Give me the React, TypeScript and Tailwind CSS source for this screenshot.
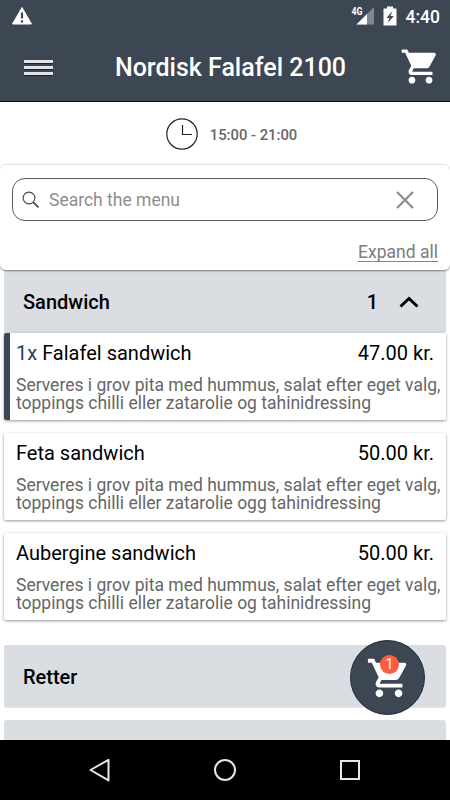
import { Fragment } from 'react';

interface MenuItem {
  name: string;
  price: string;
  lines: string[];
  quantity?: number;
}

const items: MenuItem[] = [
  {
    name: 'Falafel sandwich',
    price: '47.00 kr.',
    lines: ['Serveres i grov pita med hummus, salat efter eget valg,', 'toppings chilli eller zatarolie og tahinidressing'],
    quantity: 1,
  },
  {
    name: 'Feta sandwich',
    price: '50.00 kr.',
    lines: ['Serveres i grov pita med hummus, salat efter eget valg,', 'toppings chilli eller zatarolie ogg tahinidressing'],
  },
  {
    name: 'Aubergine sandwich',
    price: '50.00 kr.',
    lines: ['Serveres i grov pita med hummus, salat efter eget valg,', 'toppings chilli eller zatarolie og tahinidressing'],
  },
];

const CartIcon = ({ className }: { className: string }) => (
  <svg viewBox="0 0 24 24" fill="white" className={className}>
    <path d="M7 18c-1.1 0-1.99.9-1.99 2S5.9 22 7 22s2-.9 2-2-.9-2-2-2zM1 2v2h2l3.6 7.59-1.35 2.45c-.16.28-.25.61-.25.96 0 1.1.9 2 2 2h12v-2H7.42c-.14 0-.25-.11-.25-.25l.03-.12.9-1.63h7.45c.75 0 1.41-.41 1.75-1.03l3.58-6.49A1.003 1.003 0 0 0 20 4H5.21l-.94-2H1zm16 16c-1.1 0-1.99.9-1.99 2s.89 2 1.99 2 2-.9 2-2-.9-2-2-2z" />
  </svg>
);

const StatusBar = () => (
  <div className="flex h-8 items-center justify-between pl-3 pr-2.5">
    <svg viewBox="0 0 20 18" className="h-[18px] w-5">
      <path d="M10 .5 19.5 17H.5Z" fill="white" stroke="white" strokeLinejoin="round" />
      <path d="M10 5.5v6M10 13.2v2.2" stroke="#3d4653" strokeWidth="2.2" />
    </svg>
    <div className="flex items-center">
      <svg viewBox="0 0 24 20" className="h-5 w-6">
        <path d="M23 1v17.5H5.5Z" fill="#818790" />
        <path d="M16 8v10.5H5.5Z" fill="white" />
        <text x="0.5" y="8.8" fontSize="10" fontWeight="700" fontFamily="Roboto" fill="white" textLength="11" lengthAdjust="spacingAndGlyphs">4G</text>
      </svg>
      <svg viewBox="0 0 14 20" className="ml-2 h-5 w-3.5">
        <path d="M4 .5h6v2h3q.5 0 .5.5v16q0 .5-.5.5H1Q.5 19.5.5 19V3Q.5 2.500 1 2.500h3Z" fill="white" />
        <path d="M9.500 5 3.500 12h3L4.800 17l6-7H7.500Z" fill="#3d4653" />
      </svg>
      <span className="ml-[9px] pt-0.5 text-[17.5px] font-medium leading-8 text-white">4:40</span>
    </div>
  </div>
);

const Header = () => (
  <header className="h-[102px] shrink-0 border-b border-[#080f1c] bg-[#3d4653]">
    <StatusBar />
    <div className="flex h-[69px] items-center justify-between pl-6 pr-[9px]">
      <div className="flex w-[29px] flex-col gap-[3px] pt-px">
        {[0, 1, 2].map((i) => (
          <div key={i} className="h-[3px] w-full bg-[#e2e3e8] shadow-[0_1px_0_#17243a]" />
        ))}
      </div>
      <h1 className="mr-[-8px] pt-[2px] text-[25px] font-medium leading-8 text-white">Nordisk Falafel 2100</h1>
      <CartIcon className="h-[41px] w-[41px]" />
    </div>
  </header>
);

const SearchPanel = () => (
  <section className="relative z-10 h-[106px] shrink-0 rounded-md border-t border-[#e4e4e4] bg-white px-3 pt-[13px] shadow-[0_1px_2px_rgba(0,0,0,0.45)]">
    <div className="flex h-[43px] items-center rounded-[13px] border border-[#5c5c5c] pl-[9px] pr-[23px]">
      <svg viewBox="0 0 18 18" className="h-[18px] w-[18px]" fill="none" stroke="#444">
        <circle cx="7" cy="7" r="5.9" strokeWidth="1.1" />
        <path d="m11.3 11.3 5.2 5" strokeWidth="1.7" />
      </svg>
      <span className="ml-[9px] grow pt-0.5 text-[17.5px] text-[#8e8e8e]">Search the menu</span>
      <svg viewBox="0 0 18 18" className="h-[18px] w-[18px]" stroke="#8c8c8c" strokeWidth="2.2">
        <path d="m1 1 16 16M17 1 1 17" />
      </svg>
    </div>
    <div className="flex justify-end pt-[22px]">
      <span className="border-b border-[#858585] text-[17.5px] leading-[18px] text-[#7c7c7c]">Expand all</span>
    </div>
  </section>
);

const ItemCard = ({ item }: { item: MenuItem }) => (
  <article className="flex h-[87px] rounded-[2px] bg-white shadow-[0_1px_3px_rgba(0,0,0,0.42)]">
    <div className={item.quantity ? 'w-1.5 shrink-0 rounded-l-[2px] bg-[#3b4656]' : 'w-1.5 shrink-0'} />
    <div className="min-w-0 grow pl-1.5 pr-3 pt-[7px]">
      <div className="flex justify-between text-xl leading-[26px] text-black">
        <span>
          {item.quantity && <span className="text-[#24405f]">{item.quantity}x </span>}
          {item.name}
        </span>
        <span>{item.price}</span>
      </div>
      <p className="mt-[10px] whitespace-nowrap text-[17.5px] leading-[18px] text-[#666]">
        {item.lines.map((line, i) => (
          <Fragment key={line}>
            {i > 0 && <br />}
            {line}
          </Fragment>
        ))}
      </p>
    </div>
  </article>
);

const App = () => (
  <div className="relative flex h-[800px] w-[450px] flex-col overflow-hidden bg-white font-[Roboto,sans-serif]">
    <Header />
    <div className="flex h-[62px] shrink-0 items-center justify-center gap-3 pl-[13px] pt-0.5">
      <svg viewBox="0 0 32 32" className="h-8 w-8" fill="none" stroke="#222" strokeWidth="1.2">
        <circle cx="16" cy="16" r="15.2" />
        <path d="M16.500 7v9.500H26" />
      </svg>
      <span className="pt-0.5 text-[14.8px] font-medium text-[#666]">15:00 - 21:00</span>
    </div>
    <SearchPanel />
    <main className="flex min-h-0 grow flex-col overflow-hidden px-1">
      <div className="flex h-[62px] shrink-0 items-center rounded-b-[3px] bg-[#dadde1] pl-[19px] pr-[27px] pt-px text-xl font-medium text-black shadow-[0_1px_1px_rgba(0,0,0,0.15)]">
        <span className="grow">Sandwich</span>
        <span>1</span>
        <svg viewBox="0 0 20 12" className="ml-[21px] h-3 w-5" fill="none" stroke="black" strokeWidth="3">
          <path d="m1.500 10.500 8.500-8 8.500 8" />
        </svg>
      </div>
      <div className="mt-px flex flex-col gap-[13px]">
        {items.map((item) => (
          <ItemCard key={item.name} item={item} />
        ))}
      </div>
      <div className="mt-[25px] flex h-[62px] shrink-0 items-center rounded-[3px] bg-[#dadde1] pl-[19px] pt-0.5 text-xl font-medium text-black shadow-[0_1px_1px_rgba(0,0,0,0.1)]">
        Retter
      </div>
      <div className="mt-[13px] h-[62px] shrink-0 rounded-[3px] bg-[#dadde1]" />
    </main>
    <nav className="flex h-[60px] shrink-0 items-center justify-center gap-[101px] bg-black">
      <svg viewBox="0 0 24 24" className="h-6 w-6" fill="none" stroke="#e6e6e6" strokeWidth="2">
        <path d="M20.500 1.800v20.600L2.500 12Z" strokeLinejoin="round" />
      </svg>
      <svg viewBox="0 0 24 24" className="h-6 w-6" fill="none" stroke="#e6e6e6" strokeWidth="2">
        <circle cx="12" cy="12" r="10" />
      </svg>
      <svg viewBox="0 0 24 24" className="h-6 w-6" fill="none" stroke="#e6e6e6" strokeWidth="2">
        <rect x="3" y="3" width="18" height="18" />
      </svg>
    </nav>
    <button className="absolute left-[350px] top-[640px] flex h-[75px] w-[75px] items-center justify-center rounded-full border border-[#1c2a40] bg-[#3d4653]">
      <CartIcon className="ml-[3px] h-[46px] w-[46px]" />
      <span className="absolute left-[29px] top-[14px] flex h-[19px] w-[19px] items-center justify-center rounded-full bg-[#fc5c40] text-[14px] text-white">
        1
      </span>
    </button>
  </div>
);

export default App;
